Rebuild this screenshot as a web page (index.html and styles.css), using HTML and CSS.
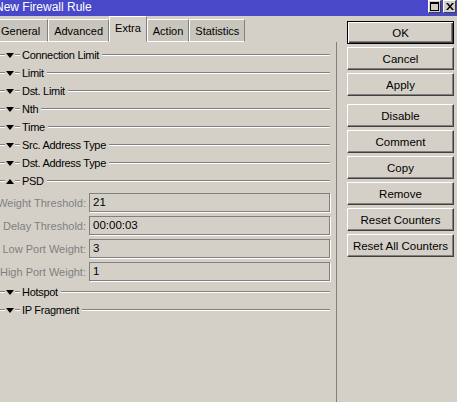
FILE: index.html
```html
<!DOCTYPE html>
<html>
<head>
<meta charset="utf-8">
<link rel="stylesheet" href="styles.css">
</head>
<body>
<div class="window">
  <div class="titlebar">
    <span class="title">New Firewall Rule</span>
    <div class="wbtns">
      <span class="wbtn">
        <svg width="9" height="9" viewBox="0 0 9 9"><rect x="0.5" y="0.5" width="8" height="8" fill="none" stroke="#000"/><rect x="0" y="0" width="9" height="2" fill="#000"/></svg>
      </span>
      <span class="wbtn">
        <svg width="8" height="7" viewBox="0 0 8 7"><path d="M0 0h2l2 2.5 2-2.5h2L5 3.5 8 7H6L4 4.5 2 7H0l3-3.5z" fill="#000"/></svg>
      </span>
    </div>
  </div>
  <div class="main">
    <div class="left">
      <div class="tabs">
        <span class="tab">General</span>
        <span class="tab">Advanced</span>
        <span class="tab active">Extra</span>
        <span class="tab">Action</span>
        <span class="tab">Statistics</span>
      </div>
      <div class="panel">
        <div class="section"><span class="dash"></span><span class="tri down"></span><span class="dash"></span><span class="stitle">Connection Limit</span><span class="line"></span></div>
        <div class="section"><span class="dash"></span><span class="tri down"></span><span class="dash"></span><span class="stitle">Limit</span><span class="line"></span></div>
        <div class="section"><span class="dash"></span><span class="tri down"></span><span class="dash"></span><span class="stitle">Dst. Limit</span><span class="line"></span></div>
        <div class="section"><span class="dash"></span><span class="tri down"></span><span class="dash"></span><span class="stitle">Nth</span><span class="line"></span></div>
        <div class="section"><span class="dash"></span><span class="tri down"></span><span class="dash"></span><span class="stitle">Time</span><span class="line"></span></div>
        <div class="section"><span class="dash"></span><span class="tri down"></span><span class="dash"></span><span class="stitle">Src. Address Type</span><span class="line"></span></div>
        <div class="section"><span class="dash"></span><span class="tri down"></span><span class="dash"></span><span class="stitle">Dst. Address Type</span><span class="line"></span></div>
        <div class="section"><span class="dash"></span><span class="tri up"></span><span class="dash"></span><span class="stitle">PSD</span><span class="line"></span></div>
        <div class="fields">
          <div class="field"><label>Weight Threshold:</label><span class="input">21</span></div>
          <div class="field"><label>Delay Threshold:</label><span class="input">00:00:03</span></div>
          <div class="field"><label>Low Port Weight:</label><span class="input">3</span></div>
          <div class="field"><label>High Port Weight:</label><span class="input">1</span></div>
        </div>
        <div class="section"><span class="dash"></span><span class="tri down"></span><span class="dash"></span><span class="stitle">Hotspot</span><span class="line"></span></div>
        <div class="section"><span class="dash"></span><span class="tri down"></span><span class="dash"></span><span class="stitle">IP Fragment</span><span class="line"></span></div>
      </div>
    </div>
    <div class="right">
      <div class="group">
        <button class="btn default">OK</button>
        <button class="btn">Cancel</button>
        <button class="btn">Apply</button>
      </div>
      <div class="group">
        <button class="btn">Disable</button>
        <button class="btn">Comment</button>
        <button class="btn">Copy</button>
        <button class="btn">Remove</button>
        <button class="btn">Reset Counters</button>
        <button class="btn">Reset All Counters</button>
      </div>
    </div>
  </div>
</div>
</body>
</html>
```

FILE: styles.css
```css
html, body {
  margin: 0;
  padding: 0;
  background: #d4d0c8;
}

.window {
  width: 457px;
  height: 402px;
  overflow: hidden;
  font-family: "Liberation Sans", Arial, sans-serif;
  font-size: 11px;
  color: #000;
  display: flex;
  flex-direction: column;
}

/* title bar */
.titlebar {
  height: 16px;
  flex: none;
  background: #4848c8;
  display: flex;
  align-items: flex-start;
  justify-content: space-between;
}

.title {
  color: #fff;
  font-size: 12px;
  line-height: 15px;
  margin-left: -5px;
  white-space: nowrap;
}

.wbtns {
  display: flex;
  gap: 2px;
  margin-right: 1px;
}

.wbtn {
  width: 11px;
  height: 11px;
  background: #d4d0c8;
  border: 1px solid;
  border-color: #fff #404040 #404040 #fff;
  display: flex;
  align-items: center;
  justify-content: center;
}

/* body */
.main {
  flex: 1;
  display: flex;
  min-height: 0;
}

.left {
  width: 337px;
  flex: none;
  display: flex;
  flex-direction: column;
}

/* tabs */
.tabs {
  height: 26px;
  flex: none;
  display: flex;
  align-items: flex-end;
}

.tab {
  height: 23px;
  box-sizing: border-box;
  padding: 0 5px;
  line-height: 22px;
  font-size: 11px;
  background: #c8c5bd;
  border-left: 1px solid #fff;
  border-top: 1px solid #fff;
  border-right: 1px solid #808080;
  border-bottom: 1px solid #fff;
  white-space: nowrap;
}

.tab:first-child {
  margin-left: -5px;
  padding-right: 7px;
}

.tab.active {
  height: 26px;
  line-height: 23px;
  background: #d4d0c8;
  border-bottom-color: #d4d0c8;
}

.panel {
  flex: 1;
  border-right: 1px solid #808080;
  padding: 4px 6px 0 0;
  display: flex;
  flex-direction: column;
}

/* collapsible section headers */
.section {
  height: 18px;
  display: flex;
  align-items: center;
}

.dash {
  width: 5px;
  height: 0;
  border-top: 1px solid #808080;
  border-bottom: 1px solid #fff;
  flex: none;
}

.tri {
  width: 0;
  height: 0;
  border-left: 4.5px solid transparent;
  border-right: 4.5px solid transparent;
  margin: 0 1px;
  flex: none;
}

.tri.down {
  border-top: 5px solid #000;
}

.tri.up {
  border-bottom: 5px solid #000;
}

.stitle {
  padding: 0 3px 0 2px;
  white-space: nowrap;
  line-height: 18px;
  letter-spacing: -0.3px;
}

.line {
  flex: 1;
  height: 0;
  border-top: 1px solid #808080;
  border-bottom: 1px solid #fff;
}

/* PSD fields */
.fields {
  padding-top: 1px;
}

.field {
  height: 23px;
  display: flex;
  align-items: center;
}

.field label {
  width: 87px;
  flex: none;
  display: flex;
  justify-content: flex-end;
  color: #808080;
  white-space: nowrap;
  padding-right: 1px;
  box-sizing: border-box;
}

.input {
  width: 241px;
  height: 19px;
  box-sizing: border-box;
  margin-left: 2px;
  border: 1px solid #808080;
  box-shadow: 1px 1px 0 #fff;
  line-height: 17px;
  padding-left: 3px;
  font-size: 11.5px;
}

/* command buttons */
.right {
  flex: 1;
  padding: 5px 0 0 10px;
  display: flex;
  flex-direction: column;
  gap: 8px;
}

.group {
  display: flex;
  flex-direction: column;
  gap: 3px;
}

.btn {
  width: 107px;
  height: 23px;
  margin: 0;
  padding: 0;
  font-family: inherit;
  font-size: 11.5px;
  color: #000;
  background: #d4d0c8;
  border: 1px solid;
  border-color: #fff #404040 #404040 #fff;
  box-shadow: inset -1px -1px 0 #808080;
  text-align: center;
}

.btn.default {
  border: 1px solid #000;
  box-shadow: inset 1px 1px 0 #fff, inset -1px -1px 0 #404040, inset -2px -2px 0 #808080;
}
```
